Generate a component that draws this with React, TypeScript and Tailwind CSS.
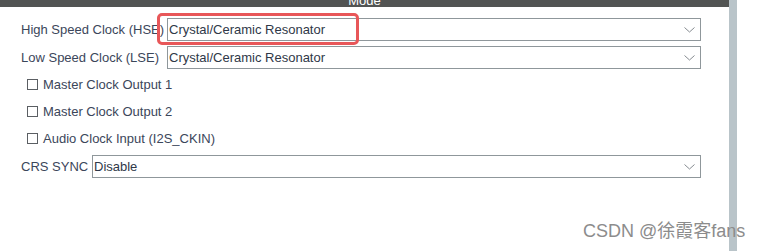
import React from "react";

const labelCls = "text-[13px] leading-none text-[#3b465a] whitespace-nowrap";

function Chevron() {
  return (
    <svg width="11" height="6" viewBox="0 0 11 6" className="shrink-0">
      <path d="M0.5 0.5 L5.5 5 L10.5 0.5" fill="none" stroke="#858b90" strokeWidth="1" />
    </svg>
  );
}

function Select({ value }: { value: string }) {
  return (
    <div className="flex h-[23px] flex-1 items-center justify-between border border-[#8f979b] bg-white pl-[1px] pr-[5px]">
      <span className="text-[13px] leading-none text-[#2f3848]">{value}</span>
      <Chevron />
    </div>
  );
}

function CheckRow({ label }: { label: string }) {
  return (
    <div className="flex h-[27px] items-center pl-[27px]">
      <div className="h-[11px] w-[11px] border border-[#5b5f63] bg-white" />
      <span className={`${labelCls} ml-[5px]`}>{label}</span>
    </div>
  );
}

export default function App() {
  return (
    <div
      className="relative flex h-[251px] w-[762px] overflow-hidden bg-white"
      style={{ fontFamily: '"Liberation Sans", Arial, sans-serif' }}
    >
      <div className="flex w-[729px] flex-col">
        {/* panel header, mostly scrolled out of view */}
        <div className="flex h-[7px] items-end justify-center overflow-hidden bg-[#525453]">
          <span className="text-[13px] leading-[13px] text-white">Mode</span>
        </div>

        <div className="flex flex-col pt-[11px] pr-[28px]">
          <div className="flex items-center pl-[21px]">
            <span className={`${labelCls} w-[146px]`}>High Speed Clock (HSE)</span>
            <div className="relative flex flex-1">
              <Select value="Crystal/Ceramic Resonator" />
              <div className="pointer-events-none absolute left-[-10px] top-[-5px] h-[32px] w-[202px] rounded-[5px] border-[3px] border-[#e85759]" />
            </div>
          </div>

          <div className="mt-[5px] flex items-center pl-[21px]">
            <span className={`${labelCls} w-[146px]`}>Low Speed Clock (LSE)</span>
            <Select value="Crystal/Ceramic Resonator" />
          </div>

          <div className="mt-[2px] flex flex-col">
            <CheckRow label="Master Clock Output 1" />
            <CheckRow label="Master Clock Output 2" />
            <CheckRow label="Audio Clock Input (I2S_CKIN)" />
          </div>

          <div className="mt-[3px] flex items-center pl-[21px]">
            <span className={`${labelCls} w-[71px]`}>CRS SYNC</span>
            <Select value="Disable" />
          </div>
        </div>
      </div>

      {/* scrollbar */}
      <div className="h-full w-[8px] bg-[#b9c4c9]" />

      {/* watermark */}
      <div
        className="absolute left-[583px] top-[221px] whitespace-nowrap text-[18px] leading-[20px] text-[#8c8c8c]"
        style={{ fontFamily: '"Liberation Sans", Arial, "Noto Sans CJK SC", sans-serif' }}
      >
        CSDN @徐霞客fans
      </div>
    </div>
  );
}
